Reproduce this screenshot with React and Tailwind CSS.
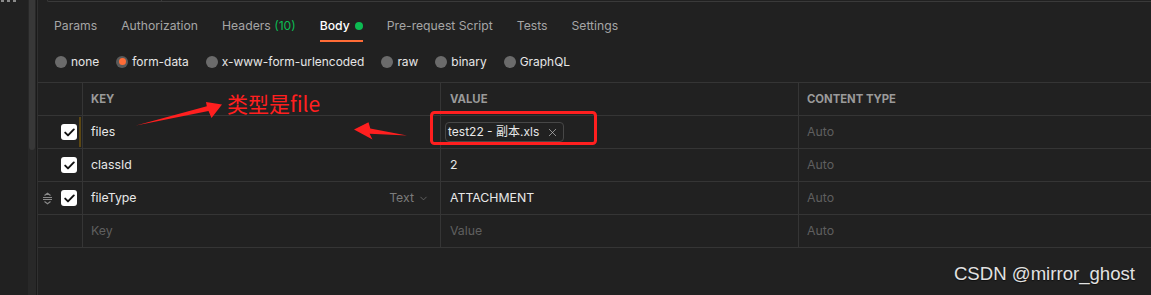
import React from "react";
import { X, ChevronDown } from "lucide-react";

const tabs = [
  { label: "Params" },
  { label: "Authorization" },
  { label: "Headers", count: "(10)" },
  { label: "Body", active: true },
  { label: "Pre-request Script" },
  { label: "Tests" },
  { label: "Settings" },
];

const modes = ["none", "form-data", "x-www-form-urlencoded", "raw", "binary", "GraphQL"];

const rows = [
  { key: "files", file: "test22 - 副本.xls", marked: true },
  { key: "classId", value: "2" },
  { key: "fileType", value: "ATTACHMENT", hover: true },
];

function Check() {
  return (
    <div className="flex h-4 w-4 shrink-0 items-center justify-center rounded-[3px] bg-white">
      <svg width="11" height="9" viewBox="0 0 11 9" fill="none">
        <path d="M1.2 4.6 4 7.4 9.8 1.4" stroke="#111" strokeWidth="1.9" strokeLinecap="round" strokeLinejoin="round" />
      </svg>
    </div>
  );
}

function Handle() {
  return (
    <svg width="11" height="13" viewBox="0 0 11 13" fill="none" stroke="#8a8a8a" strokeWidth="1.1">
      <path d="M2.5 3.5 5.5 1.2 8.5 3.5" />
      <path d="M1 5.5h9M1 7.5h9" />
      <path d="M2.5 9.5 5.5 11.8 8.5 9.5" />
    </svg>
  );
}

function Row({ row }) {
  return (
    <div className="grid h-[33px] grid-cols-[44px_358px_358px_1fr] border-b border-[#353535] text-[12.3px]">
      <div className="flex items-center pl-[4px]">
        <div className="flex w-[11px] justify-center">{row.hover && <Handle />}</div>
        <div className="ml-[8px]"><Check /></div>
        {row.marked && <div className="my-[1px] ml-[2px] w-[2px] self-stretch bg-[#5c4712]" />}
      </div>
      <div className="flex items-center justify-between border-l border-[#353535] pl-[8px] pr-[11px] text-[#e8e8e8]">
        <span>{row.key}</span>
        {row.hover && (
          <span className="flex items-center gap-[4px] text-[#7b7b7b]">
            Text <ChevronDown size={11} strokeWidth={1.5} />
          </span>
        )}
      </div>
      <div className="flex items-center border-l border-[#353535] pl-[4px] text-[#e8e8e8]">
        {row.file ? (
          <div className="flex h-[20px] items-center gap-[7px] rounded-[4px] border border-[#474747] pl-[2px] pr-[4px] font-['Inter','Noto_Sans_CJK_SC',sans-serif] text-[12px]">
            <span>{row.file}</span>
            <X size={13} strokeWidth={1.3} className="text-[#bdbdbd]" />
          </div>
        ) : (
          <span className="pl-[5px]">{row.value}</span>
        )}
      </div>
      <div className="flex items-center border-l border-[#353535] pl-[8px] text-[#5f5f5f]">Auto</div>
    </div>
  );
}

export default function App() {
  return (
    <div className="relative flex h-[295px] w-[1151px] overflow-hidden bg-[#212121] font-['Inter',sans-serif]">
      <div className="flex w-[28px] shrink-0 gap-[3px] pl-[1px]">
        <div className="h-[2px] w-[3px] bg-[#8a8a8a]" />
        <div className="h-[2px] w-[3px] bg-[#8a8a8a]" />
        <div className="h-[2px] w-[3px] bg-[#8a8a8a]" />
      </div>
      <div className="w-[8px] shrink-0 bg-[#282828] pl-[1px]">
        <div className="h-[150px] w-[6px] rounded-b-[3px] bg-[#383838]" />
      </div>
      <div className="w-[1px] shrink-0 bg-[#1b1b1b]" />

      <div className="flex-1 border-l border-[#303030]">
        <div className="ml-[9px] flex h-[2px] rounded-bl-[4px] border-b border-l border-[#3a3a3a]">
          <div className="w-[114px] border-r border-[#3a3a3a]" />
        </div>

        <div className="mt-[14px] flex gap-6 pl-4 text-[12.2px]">
          {tabs.map((t) => (
            <div
              key={t.label}
              className={`flex items-center gap-[5px] border-b-2 pb-[4px] leading-[20px] ${t.active ? "border-[#ff6c37] font-medium text-white" : "border-transparent text-[#a6a6a6]"}`}
            >
              <span>
                {t.label}
                {t.count && <span className="text-[#0cbb52]"> {t.count}</span>}
              </span>
              {t.active && <span className="h-[8px] w-[8px] rounded-full bg-[#0cbb52]" />}
            </div>
          ))}
        </div>

        <div className="mt-[9px] flex h-[22px] items-center gap-[17px] pl-[17px] text-[11.95px] text-[#e6e6e6]">
          {modes.map((m) => (
            <div key={m} className="flex items-center gap-[4px]">
              {m === "form-data" ? (
                <span className="flex h-[12px] w-[12px] items-center justify-center rounded-full bg-[#5a5a5a]">
                  <span className="h-[7px] w-[7px] rounded-full bg-[#ff6c37]" />
                </span>
              ) : (
                <span className="h-[12px] w-[12px] rounded-full bg-[#6b6b6b]" />
              )}
              <span>{m}</span>
            </div>
          ))}
        </div>

        <div className="mt-[9px] border-t border-[#353535]">
          <div className="grid h-[33px] grid-cols-[44px_358px_358px_1fr] border-b border-[#353535] text-[11.3px] font-bold text-[#9a9a9a]">
            <div />
            <div className="flex items-center border-l border-[#353535] pl-[8px]">KEY</div>
            <div className="flex items-center border-l border-[#353535] pl-[9px]">VALUE</div>
            <div className="flex items-center border-l border-[#353535] pl-[8px]">CONTENT TYPE</div>
          </div>
          {rows.map((r) => (
            <Row key={r.key} row={r} />
          ))}
          <div className="grid h-[33px] grid-cols-[44px_358px_358px_1fr] border-b border-[#353535] text-[12.3px] text-[#5f5f5f]">
            <div />
            <div className="flex items-center border-l border-[#353535] pl-[8px]">Key</div>
            <div className="flex items-center border-l border-[#353535] pl-[9px]">Value</div>
            <div className="flex items-center border-l border-[#353535] pl-[8px]">Auto</div>
          </div>
        </div>
      </div>

      {/* screenshot annotations */}
      <svg className="pointer-events-none absolute inset-0" width="1151" height="295" viewBox="0 0 1151 295">
        <rect x="431.5" y="112.5" width="164" height="31" rx="3" fill="none" stroke="#ff1f1f" strokeWidth="3" />
        <polygon points="136,125.5 208.5,111 211.5,118 222,104.5 206,102 206.8,106.3" fill="#ff1f1f" />
        <polygon points="407,135.5 369.6,133.8 372.5,139.5 354,129.5 368.5,122.3 370.3,128.5" fill="#ff1f1f" />
      </svg>
      <div className="pointer-events-none absolute left-[227px] top-[93px] font-['Noto_Sans_CJK_SC',sans-serif] text-[21px] leading-none text-[#ff1f1f]">
        类型是file
      </div>
      <div className="pointer-events-none absolute right-[16px] top-[260px] font-['Liberation_Sans',sans-serif] text-[18.6px] text-[#e2e2e2] [text-shadow:0_1px_1px_rgba(0,0,0,0.6)]">
        CSDN @mirror_ghost
      </div>
    </div>
  );
}
